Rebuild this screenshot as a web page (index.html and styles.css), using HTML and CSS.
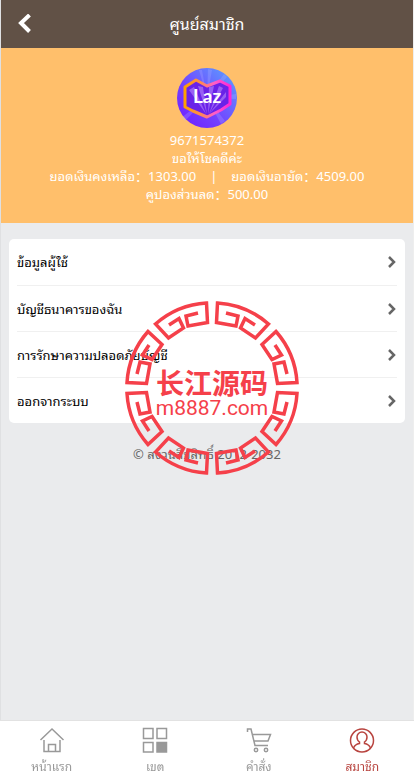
FILE: index.html
```html
<!DOCTYPE html>
<html lang="th">
<head>
    <meta charset="UTF-8">
    <meta name="viewport" content="width=device-width, initial-scale=1.0">
    <title>ศูนย์สมาชิก</title>
    <link rel="stylesheet" href="styles.css">
</head>
<body>
    <header class="header">
        <button class="back" type="button" aria-label="ย้อนกลับ">
            <svg viewBox="0 0 20 20"><path d="M14.500 1L6 9l8.500 8.500"/></svg>
        </button>
        <h1>ศูนย์สมาชิก</h1>
    </header>
    <main>
        <section class="user">
            <svg class="avatar" viewBox="0 0 60 60">
                <defs>
                    <linearGradient id="bg" x1="0" y1="1" x2="1" y2="0">
                        <stop offset="0" stop-color="#6d18ff"/>
                        <stop offset="0.4" stop-color="#7440ff"/>
                        <stop offset="1" stop-color="#58a8ff"/>
                    </linearGradient>
                    <linearGradient id="edge">
                        <stop offset="0" stop-color="#ffa000"/>
                        <stop offset="0.35" stop-color="#ff8a50"/>
                        <stop offset="0.65" stop-color="#ff5fc8"/>
                        <stop offset="1" stop-color="#ff25d8"/>
                    </linearGradient>
                </defs>
                <circle cx="30" cy="30" r="30" fill="url(#bg)"/>
                <path d="M30 30L22 2h3zM30 30L31 1l4 1zM30 30L47 6l3 3zM30 30l29-4v5zM30 30L4 50l4 3zM30 30l14 26 4-3z" fill="#b9b4ff" opacity=".25"/>
                <path d="M19 12L8 19v20l8 4 14 6 14-7 9-6V18l-10-5-13 5z" fill="#6a22e8" stroke="url(#edge)" stroke-width="3" stroke-linejoin="round"/>
                <path d="M29 46L12 22l5-3zM30 46L21 18l5 1zM31 46l1-27 5-1zM32 46l10-28 4 2zM32 46l17-22v5z" fill="#c59bff" opacity=".5"/>
                <text class="avatar-text" x="30" y="35" text-anchor="middle">Laz</text>
            </svg>
            <p>9671574372</p>
            <p>ขอให้โชคดีค่ะ</p>
            <p class="money"><span>ยอดเงินคงเหลือ：1303.00</span><span>|</span><span>ยอดเงินอายัด：4509.00</span></p>
            <p>คูปองส่วนลด：500.00</p>
        </section>
        <!-- 菜单 -->
        <ul class="menu">
            <li><a href="#">ข้อมูลผู้ใช้<svg viewBox="0 0 12 12"><path d="M4 1l5 5-5 5"/></svg></a></li>
            <li><a href="#">บัญชีธนาคารของฉัน<svg viewBox="0 0 12 12"><path d="M4 1l5 5-5 5"/></svg></a></li>
            <li><a href="#">การรักษาความปลอดภัยบัญชี<svg viewBox="0 0 12 12"><path d="M4 1l5 5-5 5"/></svg></a></li>
            <li><a href="#">ออกจากระบบ<svg viewBox="0 0 12 12"><path d="M4 1l5 5-5 5"/></svg></a></li>
        </ul>
        <p class="copy">© สงวนลิขสิทธิ์ 2012-2032</p>
    </main>
    <!-- 水印 -->
    <div class="mark">
        <svg viewBox="-88 -88 176 176">
            <defs>
                <path id="seg" d="M14 -75L26 -72L24 -62L4.500 -65.500L5.500 -85A85 85 0 0 1 56.500 -64L43.500 -50L28.500 -60L33 -69.500L43 -63"/>
                <g id="quarter">
                    <use href="#seg"/>
                    <use href="#seg" transform="matrix(0 -1 -1 0 0 0)"/>
                </g>
            </defs>
            <use href="#quarter"/>
            <use href="#quarter" transform="rotate(90)"/>
            <use href="#quarter" transform="rotate(180)"/>
            <use href="#quarter" transform="rotate(270)"/>
        </svg>
        <div class="mark-text"><b>长江源码</b><span>m8887.com</span></div>
    </div>
    <nav class="tabs">
        <a href="#">
            <svg viewBox="0 0 26 26"><path d="M1.500 13L13 2l11.500 11M5 13v11.500h16V13M9.500 24.500v-7h7v7"/></svg>
            <span>หน้าแรก</span>
        </a>
        <a href="#">
            <svg viewBox="0 0 26 26"><path d="M1.500 1.500h9.500v10H1.500zM15 1.500h9.500v10H15zM1.500 15.500h9.500v9.500H1.500z"/><path class="full" d="M15 15.500h9.500v9.500H15z"/></svg>
            <span>เขต</span>
        </a>
        <a href="#">
            <svg viewBox="0 0 26 26"><path d="M1.500 5V2H5l4 16.500h13M6.500 7.500h18L22 14H8"/><circle cx="10" cy="23" r="1.700"/><circle cx="20" cy="23" r="1.700"/></svg>
            <span>คำสั่ง</span>
        </a>
        <a class="on" href="#">
            <svg viewBox="0 0 26 26"><circle cx="13" cy="13.500" r="11.500"/><path d="M4.500 21c1-2.500 3-4 6-4.500v-1.500c-1.500-1-2.500-3-2.500-5a5 5 0 0 1 10 0c0 2-1 4-2.500 5v1.500c3 .5 5 2 6 4.500"/></svg>
            <span>สมาชิก</span>
        </a>
    </nav>
</body>
</html>
```
FILE: styles.css
```css
*{box-sizing: border-box;}
body{margin: 0;min-height: 100vh;padding-bottom: 54px;position: relative;background: #eaebed;border-left: 1px solid #dfe0e2;border-right: 1px solid #eeeeee;font: 13px/18px "Noto Sans", "Noto Sans Thai Looped", "Noto Sans Thai", "Noto Sans CJK SC", sans-serif;color: #000;}
h1,p,ul{margin: 0;padding: 0;}
a{color: inherit;text-decoration: none;}
svg{fill: none;stroke: currentColor;}
.header{height: 48px;display: grid;grid-template-columns: 48px 1fr 48px;align-items: center;background: #615146;color: #fff;text-align: center;}
.header h1{font-size: 16px;font-weight: 400;line-height: 24px;}
.back{height: 48px;padding: 0;border: 0;background: none;color: #fff;}
.back svg{display: block;width: 20px;height: 20px;margin: 0 auto;stroke-width: 4;}
.user{padding: 20px 8px;background: #ffbf6b;color: #fff;text-align: center;}
.avatar{display: block;width: 60px;height: 60px;margin: 0 auto 3px;stroke: none;}
.avatar-text{font: 700 19px Lato, sans-serif;fill: #fff;}
.money{display: flex;justify-content: center;gap: 14px;white-space: nowrap;}
.menu{margin: 16px 8px 0;padding: 0 8px;list-style: none;background: #fff;border-radius: 5px;}
.menu li{height: 46px;}
.menu li + li{border-top: 1px solid #f0f0f0;}
.menu a{height: 100%;display: flex;align-items: center;justify-content: space-between;}
.menu svg{width: 12px;height: 12px;stroke: #666;stroke-width: 2.5;}
.copy{margin-top: 22px;text-align: center;color: #666;}
.mark{position: absolute;top: 300px;left: 50%;width: 176px;height: 176px;margin-left: -83px;color: #f5404a;pointer-events: none;}
.mark svg{display: block;stroke-width: 3.5;}
.mark-text{position: absolute;top: 67px;left: 0;width: 100%;display: flex;flex-direction: column;align-items: center;}
.mark-text b{font: 700 28px/30px "Noto Sans CJK SC", sans-serif;}
.mark-text span{font: 21px/22px Roboto, sans-serif;}
.tabs{position: fixed;left: 0;right: 0;bottom: 0;height: 54px;display: grid;grid-template-columns: repeat(4, 1fr);background: #fff;border-top: 1px solid #e2e2e2;color: #999;}
.tabs a{display: flex;flex-direction: column;align-items: center;gap: 5px;padding-top: 6px;font-size: 12px;line-height: 18px;}
.tabs svg{width: 26px;height: 26px;flex: none;stroke-width: 1.5;}
.tabs .full{fill: currentColor;}
.tabs .on{color: #b8443f;}
```
